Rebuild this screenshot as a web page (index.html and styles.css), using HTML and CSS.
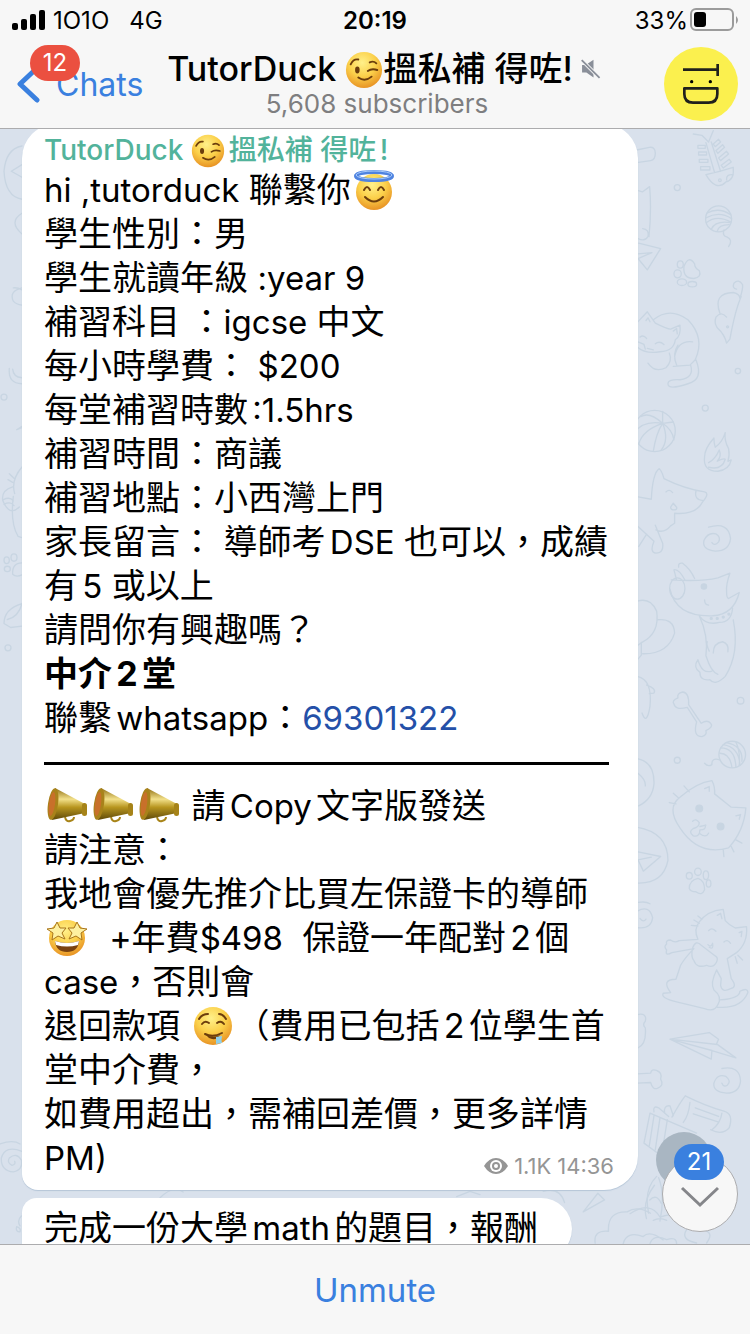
FILE: index.html
```html
<!DOCTYPE html>
<html lang="zh-Hant">
<head>
    <meta charset="UTF-8">
    <meta name="viewport" content="width=device-width, initial-scale=1.0">
    <title>TutorDuck</title>
    <link rel="stylesheet" href="styles.css">
</head>
<body>

<!-- Shared emoji -->
<svg class="sprites" aria-hidden="true">
    <defs>
        <radialGradient id="face" cx="45%" cy="30%" r="75%">
            <stop offset="0" stop-color="#fff08a"/>
            <stop offset=".5" stop-color="#fbd04a"/>
            <stop offset="1" stop-color="#e58a1f"/>
        </radialGradient>
        <linearGradient id="brass" x1="0" y1="0" x2="0" y2="1">
            <stop offset="0" stop-color="#8f6d10"/>
            <stop offset=".35" stop-color="#f2e08a"/>
            <stop offset=".6" stop-color="#b8961f"/>
            <stop offset="1" stop-color="#5e4808"/>
        </linearGradient>
        <symbol id="wink" viewBox="0 0 40 40">
            <circle cx="20" cy="20" r="19" fill="url(#face)"/>
            <g fill="none" stroke="#6b3d0c" stroke-width="2" stroke-linecap="round">
                <path d="M6 14q3-6 8-5"/>
                <path d="M26 12q4-2 7 1"/>
                <path d="M24 21q4-3 10-1"/>
                <path d="M14 28q7 5 14-1"/>
            </g>
            <ellipse cx="13" cy="20" rx="2.4" ry="3.6" fill="#6b3d0c"/>
        </symbol>
        <symbol id="halo" viewBox="0 0 40 40">
            <circle cx="20" cy="22" r="18" fill="url(#face)"/>
            <g fill="none" stroke="#6b3d0c" stroke-width="2" stroke-linecap="round">
                <path d="M10 20q3-6 6 0"/>
                <path d="M24 20q3-6 6 0"/>
                <path d="M11 27q9 9 18 0"/>
            </g>
            <ellipse cx="20" cy="6" rx="18" ry="4" fill="none" stroke="#4f83e0" stroke-width="4"/>
            <ellipse cx="20" cy="5" rx="18" ry="4" fill="none" stroke="#a9ccfa" stroke-width="1"/>
        </symbol>
        <symbol id="starstruck" viewBox="0 0 40 40">
            <circle cx="20" cy="20" r="18" fill="url(#face)"/>
            <path d="M8 23q12 4 24 0q-1 11-12 11T8 23z" fill="#7a4210"/>
            <path d="M8 23q12 4 24 0l-1 4q-11 3-22 0z" fill="#fff"/>
            <g fill="#fdf0a0" stroke="#a8741a" stroke-width="1" stroke-linejoin="round">
                <path d="M10 4l3 6 6 0-4 5 3 6-7-3-6 4 1-7-6-4 7-1z"/>
                <path d="M30 4l-3 6-6 0 4 5-3 6 7-3 6 4-1-7 6-4-7-1z"/>
            </g>
        </symbol>
        <symbol id="drool" viewBox="0 0 40 40">
            <circle cx="20" cy="20" r="19" fill="url(#face)"/>
            <g fill="none" stroke="#6b3d0c" stroke-width="2" stroke-linecap="round">
                <path d="M6 13q3-5 9-5"/>
                <path d="M26 8q4 0 7 5"/>
                <path d="M9 18q3-4 7-1"/>
                <path d="M24 17q4-3 7 1"/>
                <path d="M12 28q8 4 17-1"/>
            </g>
            <path d="M13 29q8 3 14 0q-3 5-8 4q-4-1-6-4z" fill="#6b3d0c"/>
            <path d="M23 31l6-1q-1 4 0 7l-6 1z" fill="#8fd0ec"/>
        </symbol>
        <symbol id="megaphone" viewBox="0 0 40 40">
            <path d="M18 31q1 5 5 4t4-4" fill="none" stroke="#a88418" stroke-width="2"/>
            <path d="M8 2L38 18v9L5 34z" fill="url(#brass)"/>
            <ellipse cx="6" cy="18" rx="5" ry="16" fill="#a8821a" transform="rotate(8 6 18)"/>
            <ellipse cx="5" cy="18" rx="3" ry="12" fill="#c8702a" transform="rotate(8 5 18)"/>
            <rect x="35" y="17" width="5" height="13" rx="2.5" fill="#a68318"/>
        </symbol>
    </defs>
</svg>

<header class="top">
    <div class="status">
        <div class="status-left">
            <svg class="signal" viewBox="0 0 33 22" aria-hidden="true">
                <rect x="0" y="14" width="6" height="7" rx="2"/>
                <rect x="9" y="10" width="6" height="11" rx="2"/>
                <rect x="18" y="5" width="6" height="16" rx="2"/>
                <rect x="27" y="1" width="6" height="20" rx="2"/>
            </svg>
            <span>1O1O</span>
            <span class="network">4G</span>
        </div>
        <div class="clock">20:19</div>
        <div class="status-right">
            <span>33%</span>
            <svg class="battery" viewBox="0 0 48 24" aria-hidden="true">
                <rect x="1" y="1" width="42" height="21" rx="5" fill="none" stroke="#9b9b9b" stroke-width="2"/>
                <rect x="4" y="4" width="12" height="15" rx="3"/>
                <path d="M46 8q4 4 0 8z" fill="#9b9b9b"/>
            </svg>
        </div>
    </div>
    <nav class="nav">
        <a class="back" href="#">
            <svg class="chevron" viewBox="0 0 24 38" aria-hidden="true">
                <path d="M21 3L4 19l17 16" fill="none" stroke="#3a80df" stroke-width="5" stroke-linecap="round" stroke-linejoin="round"/>
            </svg>
            <span>Chats</span>
            <span class="unread">12</span>
        </a>
        <div class="heading">
            <h1 class="title">
                <span>TutorDuck <svg class="emoji-title" role="img" aria-label="wink"><use href="#wink"/></svg>搵私補 得咗!</span>
                <svg class="muted" viewBox="0 0 54 56" aria-hidden="true">
                    <path d="M2 17h10L34 2v50L14 38H2z" fill="#8a8f99"/>
                    <path d="M3 5l48 48" stroke="#f7f7f7" stroke-width="10"/>
                    <path d="M1 3l50 50" stroke="#8a8f99" stroke-width="5"/>
                </svg>
            </h1>
            <p class="subscribers">5,608 subscribers</p>
        </div>
        <a class="profile" href="#" aria-label="TutorDuck">
            <svg class="avatar" viewBox="867 144 222 222" aria-hidden="true">
                <circle cx="978" cy="255" r="111" fill="#fbf04e"/>
                <g fill="none" stroke="#20201c" stroke-width="8">
                    <path d="M924 212h104M1028 195v36"/>
                    <path d="M928 268h99v17q0 26-26 26h-47q-26 0-26-26z" stroke-linejoin="round"/>
                </g>
                <circle cx="950" cy="248" r="5"/>
                <circle cx="1006" cy="248" r="5"/>
            </svg>
        </a>
    </nav>
</header>

<main class="chat">
    <!-- Pet doodles behind the messages -->
    <svg class="wallpaper" viewBox="0 129 750 1115" preserveAspectRatio="xMaxYMin slice" aria-hidden="true">
        <g transform="translate(630 130) scale(.333)">
            <path d="M20 60l38-8q18-2 18 18t-14 22l-42 6M25 182l12 4 22-16q6 70-2 150M38 296q20 2 16 24-8 16-30 6M26 340l66 16-40 64-28-34 42-18-42 4"/>
            <circle cx="142" cy="173" r="9"/>
            <path d="M190 12l26 4 20 20 14-34M228 38l26 90M244 36l28 88M204 46h22v9h-22zM206 66h24v9h-24zM208 88h26v9h-26zM212 110h28v10h-28zM250 42l16-14 6 8-16 14zM258 62l20-18 6 8-20 18zM266 84l24-20 6 8-24 20zM274 106l24-18 6 8-24 18zM228 134q44-10 82-22 4 38-22 44-30 30-60-22zM290 150q-2-18 20-16"/>
            <circle cx="270" cy="151" r="4"/>
            <circle cx="266" cy="267" r="39"/>
            <path d="M230 250q36-20 72 4M228 264q40-22 77 2M230 278q30-24 72-2M244 298q12-26 56-20M262 304q4-20 36-20M282 300q-6 18 10 22 18 8 4 28"/>
            <path d="M162 410q14-36 32-8 0 14 14 20 8 20-16 24-34 0-30-36z"/>
            <ellipse cx="151" cy="404" rx="9" ry="11"/><ellipse cx="143" cy="432" rx="11" ry="12"/><ellipse cx="156" cy="457" rx="14" ry="10"/><ellipse cx="187" cy="463" rx="13" ry="8"/>
            <path d="M270 550q-22-60 40-62 20 4 20 18 10-30 8-42-12-18-26-4-6 16 8 18M334 500q-18 40-34 128l-10 12q-6-26-28-46-10-16-4-32 16-20 32 0"/>
            <circle cx="293" cy="591" r="3"/>
            <path d="M20 580l32-34 24 34q36 18 46 18l28-12q4 32-14 44-4 34-46 36-44 8-70-16M70 570q50-40 104 0 52 54 22 120l-16 16-50 4M134 680q10-50 54-44M140 706q-14-34 4-60M24 636l18 8 4 14M52 656l18 4M30 622q10-8 20 4M76 642q12-10 26 2M48 572l6-8 6 12M130 604l10-8 2 16M54 700q20 30 54 14 20-20 10-44M198 690q24 60-24 72-60 20-60 0 0-14 36-12 44-6 32-44"/>
            <circle cx="324" cy="724" r="8"/><circle cx="226" cy="835" r="9"/>
        </g>
        <g transform="translate(630 400) scale(.333)">
            <circle cx="74" cy="93" r="62"/>
            <path d="M98 70q-40-36-66-20M98 70q-60-10-86 30M98 70q-60 20-72 62M98 70q-20 30-28 84M98 70q20 50-4 80M98 70q30 20 34 50M98 70l32-4M98 70V34"/>
            <path d="M224 170q0-24 28-56 0 18 4 28 22-16 30-44-4 22 10 48 4 20-2 38l10-4q-6 30-40 34-46 0-40-44zM236 188q20-10 32-38 8 18-6 34 20-10 24-6-10 34-50 24"/>
            <path d="M20 290l44 8q4-80 24-92 8 8 14 30 60 30 122 40 16 4-6 30-20 40-84 34v30l-12 8q-20 24-44 12M198 274q-6 26 22 28M108 276q10-10 20 2M130 310l-8 12q0 8 10 8t8-8zM20 376l52 48q-14 34 6 36 24 0 20-30l-22-54M26 440l22-34"/>
            <path d="M236 382q60-18 66 34-4 38-46 38-40-4-34-32 12-26 36-20 16 10 8 24-12 14-20 2"/>
            <ellipse cx="142" cy="566" rx="23" ry="32"/>
            <path d="M124 540q90 6 140-6l36-14q-12 34-10 56 0 20 6 20l32-18q-16 66-80 70-110 4-128-80M140 540l-8-30q14-4 34 32M146 502q-2-14 12-12 24 18 36 46M224 600q0 16 12 16M208 648q22 30 60 20 36 0 40-42M208 648q28 60 20 120 16 50 36 56M310 660q20 100-24 170-30 30-46 10-30 4-30-22-22-16-6-38 12 44 42 34M238 754q-10-20-6-28M250 760q0-30 28-34 20 6 16 30"/>
            <circle cx="222" cy="560" r="8" class="fill"/><circle cx="244" cy="656" r="3" class="fill"/><circle cx="262" cy="656" r="3" class="fill"/><circle cx="280" cy="652" r="3" class="fill"/><circle cx="297" cy="643" r="3" class="fill"/>
            <path d="M22 604q40-12 58 30 10 66-44 94l-12 8M82 660q50-6 52 40-20 64-96 62M34 728v38l-10 12M22 830q46 10 38 90-10 60-24 20M50 856q30 10 22 24l-14 2"/>
        </g>
        <g transform="translate(630 680) scale(.333)">
            <path d="M176 74q2-36-18-38-18 4-14 18-20 8-12 18 4 20 40 10l28 44q-12 44 16 44 16-4 12-18 24-12 14-22-10-12-28 0z"/>
            <circle cx="332" cy="62" r="10"/><circle cx="142" cy="241" r="9"/><circle cx="307" cy="224" r="40"/>
            <path d="M270 220q30 0 36 42M272 204q44 0 46 58M280 194q48 8 50 62M290 188q50 10 46 56M318 186q14 30 10 70M270 240q-26-8-24 14-12 8-22-4"/>
            <path d="M22 236q52 10 50 76-4 46-46 66M24 280q24 20 22 38"/>
            <path d="M150 352q50-44 96-50 10 20 8 40l50 40 44 2q-6 70-52 120-90 26-146-60-42-60 0-92zM162 318l16 18M130 340l16 14M118 368l20 4M336 490l-18-10M312 516l-8-16M282 530l-2-20M224 326l14-6v14M318 408l14-4-4 14M188 424q10-10 20 4 0 14-18 18-16 10 0 22 20 4 20-18 20 0 16-14M208 460q20 16 28 0M210 440l18-4"/>
            <circle cx="208" cy="386" r="10" class="fill"/><circle cx="272" cy="440" r="10" class="fill"/>
            <path d="M20 442q94 16 94 100-14 70-90 68M24 516l68 14-52 44-16-34 40-8"/>
            <path d="M178 626q0-24 26-30 20 6 20 34-8 20-26 6-16 0-20-10z"/>
            <ellipse cx="178" cy="588" rx="9" ry="10"/><ellipse cx="204" cy="576" rx="10" ry="11"/><ellipse cx="228" cy="586" rx="8" ry="13"/><ellipse cx="236" cy="611" rx="7" ry="11"/>
            <path d="M24 668q24-4 36 4M22 694q36-20 46 20-4 34-44 30M30 716q10 14 18 2"/>
        </g>
        <g transform="translate(630 900) scale(.333)">
            <path d="M208 66q24-34 72-38l6 34q10 12 30 22l34-4q4 50-30 78l-28 18 12 60q20 26-2 30-26 14-30-10l2-20-14-26q-20 40-8 60 26 20 12 44-10 24-40 12l-84-20q-50-12-40-26l22-2q-30-40 16-40l14-42q14-24 40-50l-66 12q-22 12-16-8-10-10 0-18-4-12 12-12 12 10 26 2l56-4q-14-30 4-52M188 144q10-26 26-8l42 32q10 6 4 18-10 20-30 10-30 10-38-14-10-10-4-38zM270 300q60-4 60-26 24-12 24 4-20 50-92 44M204 48l12 10M192 60l16 10M184 76l20 2M338 180l-14-14M322 190l-6-20M236 92q10-12 22 2M282 126q10-10 20 4M234 134q10 10 14-4 4 20-10 12M262 46l10-6 4 16M328 98l8-4-2 16"/>
            <path d="M120 418l118-20 28 20-6 14 58 42-72-22-2 26zM120 418l142 16M120 418l126 34"/>
            <path d="M22 522l40-2q2-14 18-8 18 6 12 26 12 20-10 28-14 4-20-18l-40 2"/>
            <path d="M276 506q54-10 56 38-4 36-42 36-42-4-38-30 10-30 36-20 18 14 4 26-10 8-16-6"/>
            <path d="M166 588q60 30 116 46 30 8 16 50-20 24-56 6M166 588q-16 20-40 64M180 608q-4 40-20 60M196 624l70 26M190 642l74 24M60 640l140 60M60 640l-18 90 60 44M72 648l-14 90M90 654l-14 96M112 660l-16 100M72 636q-4-20 14-12l30 26M104 640q-4-24 16-22l10 30M276 640q-4 30-30 50"/>
            <path d="M22 344q30-6 24 20-10 10 0 20 4 50-22 60M80 830q-40 40-24 110M86 834q20 50 4 130M70 962q20-10 40 0M0 942q60-40 90 10 60-20 80 10M170 990q-20 30 30 40M200 990q60 0 30 40M60 1032q10-30 50-12 30-10 30 12"/>
        </g>
        <g transform="translate(0 130) scale(.333)">
            <path d="M66 48q-48 8-54 76 4 76 54 84M66 104l-32 20 32 18M66 250q-42 26 0 62M66 474q-40 10-26 40 8 10 26 12M66 480q-14-8-26-6M28 716q-4 46 38 46M38 718q2 24 28 26M66 890l-16 10 16-6M66 1012q-34 40-22 80M28 1032l14 14M24 1050l14 8M38 1072q-34 10-30 40 20 50 50 20M10 1110q20-10 30 4M12 1124q20-10 30 4M40 1100q-10 80 14 120l12 4M66 1422q-54 16-54 60l20 12 34-4M66 1422q-10 40-44 48"/>
            <circle cx="12" cy="802" r="9"/><circle cx="24" cy="1555" r="9"/>
            <ellipse cx="20" cy="1292" rx="8" ry="10"/><ellipse cx="42" cy="1284" rx="9" ry="11"/><ellipse cx="22" cy="1318" rx="9" ry="8"/><path d="M66 1300q-30 0-28 34 10 10 28 2"/>
        </g>
        <g transform="translate(0 1130) scale(.333)">
            <path d="M0 42q40-14 60 0M66 64q-50-20-62 20-2 38 36 42 30-6 24-36-14-24-36-6-8 14 8 22 12-2 8-12M64 258q-14 14-4 30M50 290q14 4 10 16-14 0-10-16M480 204q40-40 70-18"/>
        </g>
        <g transform="translate(450 1120) scale(.333)">
            <path d="M436 370q-6-40 40-36-4-60 56-58 30-20 70 4M400 276l44-56 20 20zM590 296q-14-50 24-100M600 240q20-20 34 10M20 230l40-16 30 10M280 214q50-14 64 34M520 372q10-40 60-22 20-20 60 10"/>
        </g>
    </svg>

    <div class="messages">
        <article class="bubble">
            <h2 class="author">TutorDuck <svg class="emoji-author" role="img" aria-label="wink"><use href="#wink"/></svg>搵私補 得咗!</h2>
            <p><span class="latin">hi ,tutorduck </span>聯繫你<svg class="emoji" role="img" aria-label="halo"><use href="#halo"/></svg></p>
            <p>學生性別：男</p>
            <p>學生就讀年級 <span class="latin">:year 9</span></p>
            <p>補習科目 ：<span class="latin">igcse </span>中文</p>
            <p>每小時學費： <span class="latin">$200</span></p>
            <p>每堂補習時數<span class="latin">:1.5hrs</span></p>
            <p>補習時間：商議</p>
            <p>補習地點：小西灣上門</p>
            <p>家長留言： 導師考<span class="latin">DSE </span>也可以，成績有<span class="latin">5</span> 或以上</p>
            <p>請問你有興趣嗎？</p>
            <p><strong>中介2堂</strong></p>
            <p>聯繫<span class="latin">whatsapp</span>：<a class="phone latin" href="tel:69301322">69301322</a></p>
            <hr class="divider">
            <p><svg class="emoji" role="img" aria-label="megaphone"><use href="#megaphone"/></svg><svg class="emoji" role="img" aria-label="megaphone"><use href="#megaphone"/></svg><svg class="emoji" role="img" aria-label="megaphone"><use href="#megaphone"/></svg> 請<span class="latin">Copy</span>文字版發送</p>
            <p>請注意：</p>
            <p>我地會優先推介比買左保證卡的導師<br><svg class="emoji" role="img" aria-label="star-struck"><use href="#starstruck"/></svg>&nbsp; +年費<span class="latin">$498</span>&nbsp; 保證一年配對2個 <span class="latin">case</span>，否則會</p>
            <p>退回款項 <svg class="emoji" role="img" aria-label="drooling"><use href="#drool"/></svg>（費用已包括2位學生首堂中介費，</p>
            <p>如費用超出，需補回差價，更多詳情<span class="latin">PM)</span>
                <span class="meta">
                    <svg class="eye" viewBox="0 0 24 18" aria-hidden="true">
                        <path d="M0 9Q5 1 12 1t12 8q-5 8-12 8T0 9z" fill="#959595"/>
                        <circle cx="12" cy="9" r="6" fill="#fff"/>
                        <circle cx="12" cy="9" r="4" fill="#959595"/>
                        <circle cx="12" cy="9" r="2" fill="#fff"/>
                    </svg>
                    <span>1.1K</span>
                    <time>14:36</time>
                </span>
            </p>
        </article>
        <article class="bubble bubble-next">
            <p>完成一份大學<span class="latin">math</span>的題目，報酬</p>
        </article>
    </div>

    <div class="jump">
        <span class="jump-shadow"></span>
        <button class="jump-button" type="button" aria-label="Scroll to latest">
            <svg class="jump-arrow" viewBox="0 0 40 22" aria-hidden="true">
                <path d="M2 2l18 17L38 2" fill="none" stroke="#85868a" stroke-width="3"/>
            </svg>
        </button>
        <span class="jump-count">21</span>
    </div>
</main>

<footer class="bottom">
    <button class="unmute" type="button">Unmute</button>
</footer>

</body>
</html>
```
FILE: styles.css
```css
* {
    box-sizing: border-box;
}
body {
    margin: 0;
    height: 100vh;
    display: flex;
    flex-direction: column;
    font-family: Inter, "Noto Sans CJK TC", sans-serif;
    color: #000;
    background: #f7f7f7;
}
h1, h2, p {
    margin: 0;
}
a {
    text-decoration: none;
}
.sprites {
    position: absolute;
    width: 0;
    height: 0;
}

/* Status bar and navigation */
.top {
    background: #f7f7f7;
    border-bottom: 1px solid #acacae;
    position: relative;
    z-index: 1;
}
.status {
    display: grid;
    grid-template-columns: 1fr auto 1fr;
    align-items: center;
    height: 40px;
    padding: 0 12px;
    font-size: 24px;
}
.status-left, .status-right {
    display: flex;
    align-items: center;
    gap: 8px;
}
.status-right {
    justify-content: flex-end;
    gap: 2px;
}
.signal {
    width: 33px;
    height: 22px;
}
.network {
    margin-left: 12px;
}
.clock {
    font-weight: 600;
}
.battery {
    width: 48px;
    height: 24px;
}
.nav {
    display: grid;
    grid-template-columns: 1fr auto 1fr;
    align-items: center;
    height: 88px;
    padding: 0 12px 0 16px;
}
.back {
    position: relative;
    display: flex;
    align-items: center;
    gap: 16px;
    color: #3a80df;
    font-size: 32px;
}
.chevron {
    width: 24px;
    height: 38px;
}
.unread {
    position: absolute;
    left: 14px;
    top: -20px;
    width: 50px;
    height: 36px;
    border-radius: 18px;
    background: #eb5040;
    color: #fff;
    font-size: 24px;
    line-height: 36px;
    text-align: center;
}
.heading {
    text-align: center;
}
.title {
    display: flex;
    align-items: center;
    gap: 8px;
    padding-left: 14px;
    font-size: 34px;
    line-height: 40px;
    font-weight: 500;
    white-space: nowrap;
}
.emoji-title {
    width: 38px;
    height: 38px;
    vertical-align: -8px;
}
.muted {
    width: 20px;
    height: 20px;
}
.subscribers {
    font-size: 26px;
    line-height: 30px;
    color: #7e7e80;
}
.profile {
    justify-self: end;
    height: 74px;
}
.avatar {
    width: 74px;
    height: 74px;
}

/* Conversation */
.chat {
    position: relative;
    flex: 1;
    min-height: 0;
    overflow: hidden;
    background: #d9e1ec;
}
.wallpaper {
    position: absolute;
    top: 0;
    left: 0;
    width: 100%;
    height: 100%;
    fill: none;
    stroke: #c8d5e2;
    stroke-width: 4;
    stroke-linejoin: round;
    stroke-linecap: round;
}
.wallpaper .fill {
    fill: #c8d5e2;
}
.messages {
    position: relative;
    display: flex;
    flex-direction: column;
    align-items: flex-start;
    gap: 8px;
    margin-top: -5px;
    padding: 0 112px 0 22px;
}
.bubble {
    padding: 8px 22px 10px;
    background: #fff;
    border-radius: 34px 34px 34px 16px;
    box-shadow: 0 1px 1px #b5c6d8;
    font-size: 34px;
    line-height: 44px;
    text-autospace: normal;
}
.bubble-next {
    padding-right: 34px;
    border-radius: 16px 34px 34px 16px;
}
.author {
    font-size: 28px;
    line-height: 36px;
    font-weight: 500;
    color: #52b39b;
}
/* Inter runs wide next to the Chinese text */
.latin {
    font-size: 33px;
}
.emoji {
    width: 40px;
    height: 40px;
    margin: 0 3px;
    vertical-align: -8px;
}
.emoji-author {
    width: 34px;
    height: 34px;
    margin-right: 4px;
    vertical-align: -8px;
}
.phone {
    color: #2450a8;
}
.divider {
    height: 3px;
    margin: 22px 7px 19px 0;
    border: 0;
    background: #000;
}
.meta {
    float: right;
    display: flex;
    align-items: center;
    gap: 6px;
    margin: 16px 2px 0 0;
    color: #959595;
    font-size: 22px;
    line-height: 28px;
}
.eye {
    width: 24px;
    height: 18px;
}

/* Jump to latest */
.jump {
    position: absolute;
    right: 12px;
    bottom: 12px;
    width: 82px;
    height: 100px;
}
.jump-shadow {
    position: absolute;
    left: 0;
    top: 0;
    width: 56px;
    height: 56px;
    border-radius: 50%;
    background: #a9b6c2;
}
.jump-button {
    position: absolute;
    right: 0;
    bottom: 0;
    width: 76px;
    height: 76px;
    padding: 8px 0 0;
    border: 1px solid #acacae;
    border-radius: 50%;
    background: #f7f7f7;
}
.jump-arrow {
    width: 40px;
    height: 22px;
}
.jump-count {
    position: absolute;
    right: 14px;
    top: 12px;
    width: 50px;
    height: 36px;
    border-radius: 18px;
    background: #3a80df;
    color: #fff;
    font-size: 24px;
    line-height: 36px;
    text-align: center;
}

.bottom {
    display: flex;
    height: 90px;
    border-top: 1px solid #acacae;
    background: #f7f7f7;
}
.unmute {
    flex: 1;
    border: 0;
    background: none;
    color: #3a80df;
    font-family: inherit;
    font-size: 33px;
}
```
